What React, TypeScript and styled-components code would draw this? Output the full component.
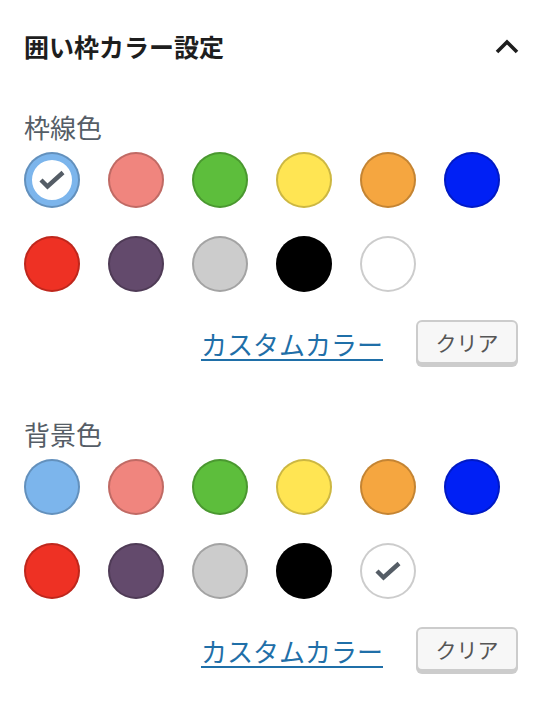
import styled, { createGlobalStyle } from "styled-components";

const GlobalStyle = createGlobalStyle`
  html, body {
    margin: 0;
    padding: 0;
    background: #fff;
  }
  body {
    font-family: "Noto Sans CJK JP", "Noto Sans", sans-serif;
  }
`;

const Panel = styled.div`
  width: 542px;
  padding: 0 24px;
  box-sizing: border-box;
`;

const Header = styled.div`
  display: flex;
  align-items: center;
  justify-content: space-between;
  padding-top: 31px;
  height: 30px;
`;

const Title = styled.h2`
  margin: 0;
  font-size: 25px;
  line-height: 30px;
  font-weight: 700;
  color: #1e1e1e;
`;

const Toggle = styled.button`
  border: 0;
  background: none;
  padding: 0;
  width: 24px;
  height: 24px;
  display: flex;
  align-items: center;
  justify-content: center;
  margin-right: -1px;
`;

const Section = styled.section<{ $first?: boolean }>`
  margin-top: ${(p) => (p.$first ? "49.5px" : "50.5px")};
`;

const Label = styled.div`
  font-size: 26px;
  line-height: 31px;
  color: #555d66;
`;

const Swatches = styled.div`
  display: flex;
  flex-wrap: wrap;
  gap: 28px;
  margin-top: 10.5px;
  width: 500px;
`;

const Swatch = styled.button<{ $color: string; $active?: boolean }>`
  width: 56px;
  height: 56px;
  border: 0;
  padding: 0;
  border-radius: 50%;
  display: flex;
  align-items: center;
  justify-content: center;
  background: ${(p) => (p.$active ? "#fff" : p.$color)};
  box-shadow: ${(p) =>
    p.$active
      ? `inset 0 0 0 2px rgba(0,0,0,0.2), inset 0 0 0 8px ${p.$color}`
      : "inset 0 0 0 2px rgba(0,0,0,0.2)"};
`;

const Actions = styled.div`
  display: flex;
  align-items: center;
  justify-content: flex-end;
  gap: 33px;
  margin-top: 28px;
`;

const CustomLink = styled.a`
  font-size: 26px;
  line-height: 31px;
  color: #1f6fa8;
  text-decoration: underline;
  text-decoration-thickness: 2px;
  text-underline-offset: 4px;
`;

const ClearButton = styled.button`
  width: 102px;
  height: 44px;
  box-sizing: border-box;
  border: 2px solid #cccccc;
  border-radius: 6px;
  background: #f7f7f7;
  box-shadow: 0 3px 0 #cccccc;
  margin-bottom: 3px;
  font-family: "Noto Sans CJK JP", "Noto Sans", sans-serif;
  font-size: 21px;
  color: #555555;
  padding: 0;
`;

const colors = [
  "#7cb5ec",
  "#f0857e",
  "#5dbe3c",
  "#ffe553",
  "#f5a640",
  "#0020f5",
  "#ee3124",
  "#634a6c",
  "#cccccc",
  "#000000",
  "#ffffff",
];

const Check = () => (
  <svg width="28" height="20" viewBox="0 0 28 20">
    <polyline
      points="3,10 9.5,16.5 25,2.5"
      fill="none"
      stroke="#555d66"
      strokeWidth="4.4"
    />
  </svg>
);

const Chevron = () => (
  <svg width="24" height="16" viewBox="0 0 24 16">
    <polyline points="2,14 12,4 22,14" fill="none" stroke="#1e1e1e" strokeWidth="3.6" />
  </svg>
);

const ColorGroup = ({
  label,
  selected,
  first,
}: {
  label: string;
  selected: string;
  first?: boolean;
}) => (
  <Section $first={first}>
    <Label>{label}</Label>
    <Swatches>
      {colors.map((c) => (
        <Swatch key={c} $color={c} $active={c === selected}>
          {c === selected && <Check />}
        </Swatch>
      ))}
    </Swatches>
    <Actions>
      <CustomLink href="#">カスタムカラー</CustomLink>
      <ClearButton type="button">クリア</ClearButton>
    </Actions>
  </Section>
);

const App = () => {
  return (
    <Panel>
      <GlobalStyle />
      <Header>
        <Title>囲い枠カラー設定</Title>
        <Toggle type="button">
          <Chevron />
        </Toggle>
      </Header>
      <ColorGroup label="枠線色" selected="#7cb5ec" first />
      <ColorGroup label="背景色" selected="#ffffff" />
    </Panel>
  );
};

export default App;
